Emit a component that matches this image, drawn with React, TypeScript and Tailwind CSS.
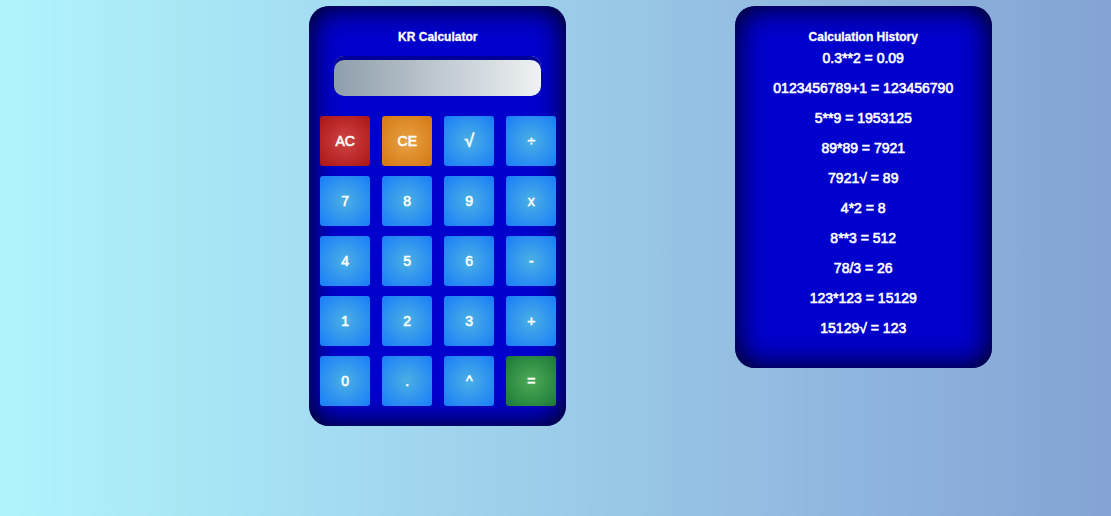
type Tone = "red" | "orange" | "green" | "blue";

const tones: Record<Tone, string> = {
  red: "bg-[radial-gradient(circle,#d04545,#ab1414)]",
  orange: "bg-[radial-gradient(circle,#e9a244,#d47712)]",
  green: "bg-[radial-gradient(circle,#4fab56,#187839)]",
  blue: "bg-[radial-gradient(circle,#4bb0e3,#187cfa)]",
};

const keys: { label: string; tone?: Tone }[] = [
  { label: "AC", tone: "red" },
  { label: "CE", tone: "orange" },
  { label: "√" },
  { label: "÷" },
  { label: "7" },
  { label: "8" },
  { label: "9" },
  { label: "x" },
  { label: "4" },
  { label: "5" },
  { label: "6" },
  { label: "-" },
  { label: "1" },
  { label: "2" },
  { label: "3" },
  { label: "+" },
  { label: "0" },
  { label: "." },
  { label: "^" },
  { label: "=", tone: "green" },
];

const history = [
  "0.3**2 = 0.09",
  "0123456789+1 = 123456790",
  "5**9 = 1953125",
  "89*89 = 7921",
  "7921√ = 89",
  "4*2 = 8",
  "8**3 = 512",
  "78/3 = 26",
  "123*123 = 15129",
  "15129√ = 123",
];

const panel =
  "w-[257px] rounded-[20px] bg-[#0000cd] pt-5 pb-5 text-center text-white shadow-[inset_0_0_30px_#000]";
const title = "text-xs font-bold leading-[22px] [-webkit-text-stroke:0.3px_white]";

export default function App() {
  return (
    <main
      className="grid min-h-screen grid-cols-2 items-start justify-items-center bg-[linear-gradient(to_right,#b0f4fb,#9bcce9_50%,#84a3d4)] pt-1.5 pr-[35px] pl-[225px] font-['Liberation_Sans',Arial,sans-serif]"
    >
      <section className={panel}>
        <h1 className={title}>
          <label htmlFor="display">KR Calculator</label>
        </h1>
        <div className="mt-2 px-[25px]">
          <input
            id="display"
            readOnly
            className="block h-10 w-full rounded-[10px] bg-[linear-gradient(to_right,#8e9eab,#eef2f3)] px-2 text-right text-black shadow-[inset_0_4px_0_#000099] outline-none"
          />
        </div>
        <div className="mt-5 grid grid-cols-4 gap-x-3 gap-y-2.5 pr-2.5 pl-[11px]">
          {keys.map(({ label, tone = "blue" }) => (
            <button
              key={label}
              type="button"
              className={`h-[50px] rounded-[3px] ${label === "√" ? "text-lg" : "text-sm"} [-webkit-text-stroke:0.6px_white] ${tones[tone]}`}
            >
              {label}
            </button>
          ))}
        </div>
      </section>
      <section className={panel}>
        <h2 className={title}>Calculation History</h2>
        <ul>
          {history.map((entry) => (
            <li key={entry} className="mb-2.5 text-sm leading-5 [-webkit-text-stroke:0.6px_white]">
              {entry}
            </li>
          ))}
        </ul>
      </section>
    </main>
  );
}
